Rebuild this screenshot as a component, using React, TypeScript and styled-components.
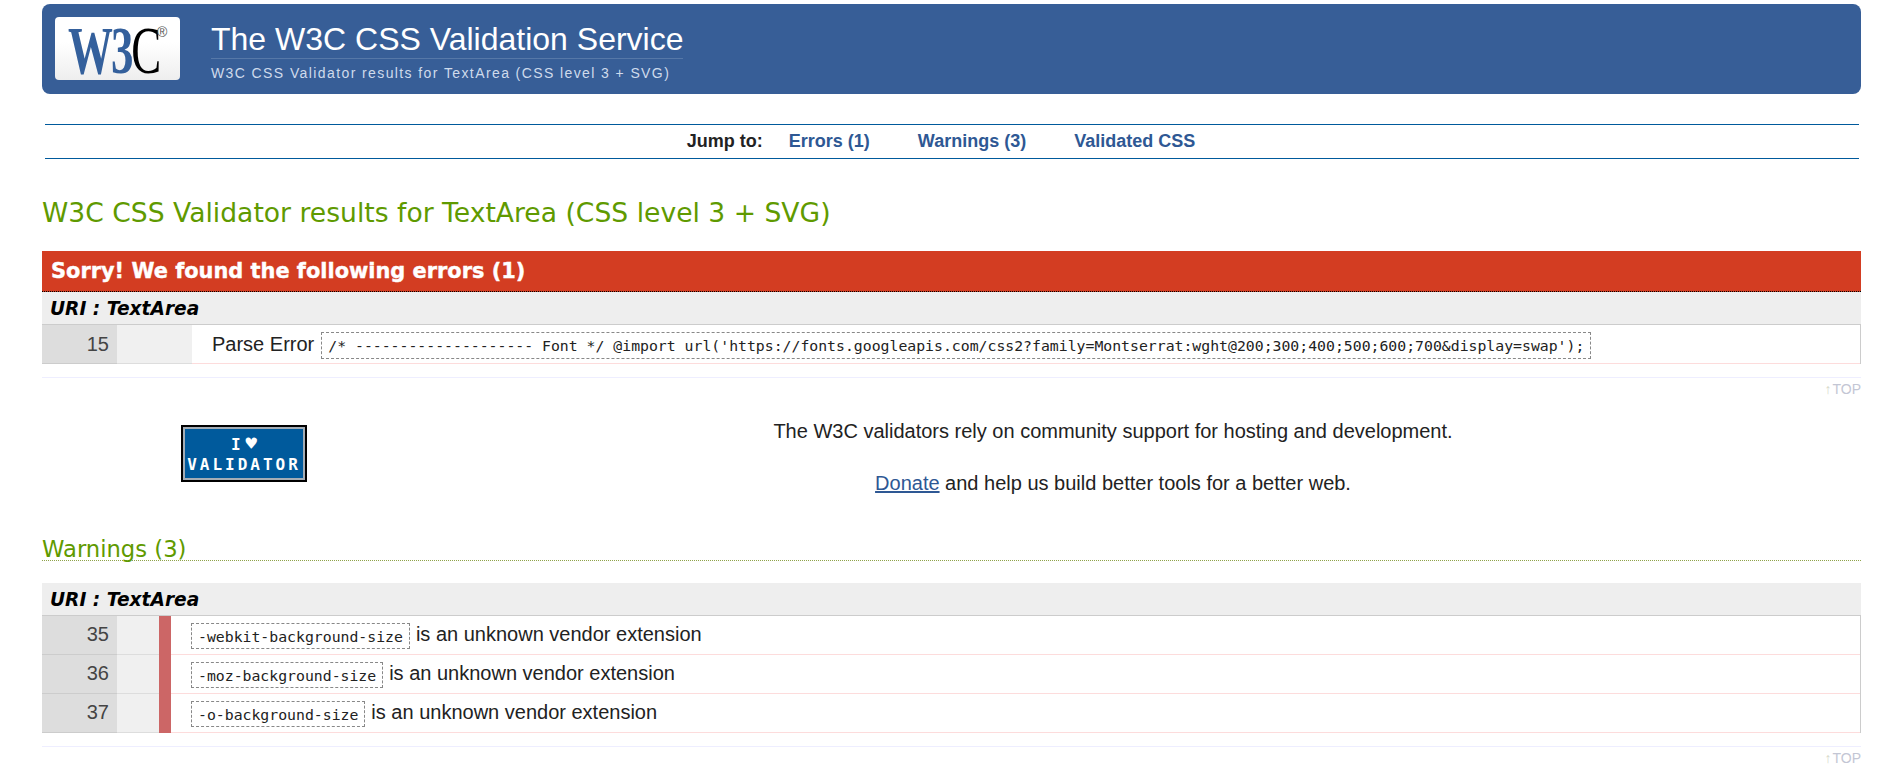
import React from "react"
import styled, { createGlobalStyle } from "styled-components"

const GlobalStyle = createGlobalStyle`
	html, body {
		margin: 0;
		padding: 0;
		background: #fff;
		overflow: hidden;
	}
	body {
		font-family: "Liberation Sans", Arial, sans-serif;
		color: #222;
	}
`

const Page = styled.div`
	width: 1889px;
	height: 776px;
	box-sizing: border-box;
	padding: 4px 28px 0 42px;
	overflow: hidden;
`

const Banner = styled.header`
	display: flex;
	align-items: flex-start;
	height: 90px;
	background: #375e97;
	border-radius: 8px;
`

const Logo = styled.a`
	display: block;
	position: relative;
	flex: none;
	width: 125px;
	height: 63px;
	margin: 13px 0 0 13px;
	background: linear-gradient(#fff 40%, #eee);
	border-radius: 4px;
`

const LogoText = styled.span`
	position: absolute;
	left: 13px;
	top: 3px;
	font-family: "Liberation Serif", serif;
	font-size: 68px;
	font-weight: 700;
	line-height: 60px;
	letter-spacing: -3px;
	color: #34609c;
	transform: scaleX(0.66);
	transform-origin: left top;
	white-space: nowrap;
`

const LogoC = styled.span`
	color: #000;
	font-weight: 400;
`

const LogoMark = styled.span`
	position: absolute;
	left: 102px;
	top: 8px;
	font-size: 14px;
	line-height: 14px;
	color: #555;
`

const BannerText = styled.div`
	margin-left: 31px;
	padding-top: 17px;
`

const Title = styled.h1`
	margin: 0;
	font-size: 32px;
	line-height: 37px;
	font-weight: 400;
	color: #fff;
	border-bottom: 1px solid #5678a8;
`

const Subtitle = styled.p`
	margin: 0;
	padding-top: 5px;
	font-size: 14px;
	line-height: 18px;
	letter-spacing: 1.4px;
	color: #cfdbec;
`

const JumpBar = styled.nav`
	display: flex;
	justify-content: center;
	align-items: center;
	box-sizing: border-box;
	height: 35px;
	margin: 30px 2px 0 3px;
	padding-right: 22px;
	border-top: 1px solid #005a9c;
	border-bottom: 1px solid #005a9c;
	font-size: 18px;
	font-weight: 700;
`

const JumpLabel = styled.span`
	margin-right: 26px;
	color: #222;
`

const JumpLink = styled.a<{ $last?: boolean }>`
	margin-right: ${(p) => (p.$last ? "0" : "48px")};
	color: #2e5894;
	text-decoration: none;
`

const ResultsHeading = styled.h2`
	margin: 36px 0 0;
	font-family: "DejaVu Sans", Verdana, sans-serif;
	font-size: 26.6px;
	line-height: 36px;
	font-weight: 400;
	color: #5f9a00;
`

const ErrorBar = styled.h3`
	display: flex;
	align-items: center;
	box-sizing: border-box;
	height: 41px;
	margin: 20px 0 0;
	padding-left: 9px;
	background: #d33d22;
	border-bottom: 1px dotted #000;
	font-family: "DejaVu Sans", Verdana, sans-serif;
	font-size: 20.9px;
	font-weight: 700;
	-webkit-text-stroke: 0.4px #fff;
	color: #fff;
`

const UriRow = styled.div`
	display: flex;
	align-items: center;
	box-sizing: border-box;
	height: 32px;
	padding-left: 8px;
	background: #eee;
	font-family: "DejaVu Sans", Verdana, sans-serif;
	font-size: 18.6px;
	font-weight: 700;
	font-style: italic;
	color: #000;
`

const Table = styled.div`
	border-right: 1px solid #ccc;
	border-top: 1px solid #ccc;
`

const Row = styled.div`
	display: flex;
	height: 39px;
`

const LineNo = styled.div<{ $top: number }>`
	flex: none;
	box-sizing: border-box;
	width: 75px;
	padding: ${(p) => p.$top}px 8px 0 0;
	background: #ddd;
	border-bottom: 1px solid #ccc;
	text-align: right;
	font-size: 20px;
	line-height: 24px;
	color: #444;
`

const Context = styled.div<{ $wide?: boolean }>`
	flex: none;
	width: ${(p) => (p.$wide ? "75px" : "42px")};
	background: #f0f0f0;
	border-bottom: 1px solid #ddd;
`

const Level = styled.div`
	flex: none;
	width: 12px;
	background: #c66;
`

const Message = styled.div`
	flex: 1;
	display: flex;
	align-items: flex-start;
	box-sizing: border-box;
	padding: 7px 0 0 20px;
	border-bottom: 1px solid #fddcdc;
	font-size: 20px;
	line-height: 24px;
	color: #222;
`

const ErrorLabel = styled.span`
	margin-right: 7px;
`

const WarningLabel = styled.span`
	margin-top: -1px;
`

const Code = styled.code<{ $height: number }>`
	display: block;
	box-sizing: border-box;
	height: ${(p) => p.$height}px;
	margin: 0 6px 0 0;
	padding: 0 6px;
	border: 1px dashed #888;
	font-family: "DejaVu Sans Mono", Consolas, monospace;
	font-size: 14.8px;
	line-height: ${(p) => p.$height - 1}px;
	white-space: pre;
	color: #222;
`

const Rule = styled.div`
	height: 0;
	margin-top: 13px;
	border-top: 1px solid #eef;
`

const TopLink = styled.a`
	display: block;
	margin-top: 2px;
	text-align: right;
	font-size: 14px;
	line-height: 18px;
	color: #c3c6d4;
`

const TopArrow = styled.span`
	color: #d6d8c8;
	margin-right: 1px;
`

const Support = styled.section`
	display: flex;
	height: 134px;
`

const Badge = styled.a`
	flex: none;
	display: flex;
	flex-direction: column;
	align-items: center;
	justify-content: center;
	box-sizing: border-box;
	width: 126px;
	height: 57px;
	margin: 27px 0 0 139px;
	background: #005a9c;
	border: 2px solid #000;
	box-shadow: inset 0 0 0 2px #a4adb5;
	font-family: "DejaVu Sans Mono", monospace;
	font-size: 16px;
	font-weight: 700;
	line-height: 20px;
	color: #fff;
	white-space: nowrap;
`

const BadgeHeart = styled.span`
	font-size: 19px;
	margin-left: 5px;
`

const BadgeWord = styled.span`
	letter-spacing: 3px;
`

const SupportText = styled.div`
	flex: none;
	width: 680px;
	margin-left: 466px;
	padding-top: 21px;
	text-align: center;
	font-size: 20px;
	line-height: 24px;
	color: #222;
`

const SupportLine = styled.p`
	margin: 0 0 28px;
`

const DonateLink = styled.a`
	color: #2e5894;
	text-decoration: underline;
`

const WarningsHeading = styled.h2`
	box-sizing: border-box;
	height: 30px;
	margin: -1px 0 0;
	padding-top: 5px;
	font-family: "DejaVu Sans", Verdana, sans-serif;
	font-size: 22.7px;
	line-height: 26px;
	font-weight: 400;
	color: #5f9a00;
	border-bottom: 1px dotted #8fa34a;
`

const WarningsUri = styled(UriRow)`
	margin-top: 22px;
`

const warnings = [
	{ line: 35, prop: "-webkit-background-size" },
	{ line: 36, prop: "-moz-background-size" },
	{ line: 37, prop: "-o-background-size" },
]

const longCode =
	"/* -------------------- Font */ @import url('https://fonts.googleapis.com/css2?family=Montserrat:wght@200;300;400;500;600;700&display=swap');"

export default function App() {
	return (
		<Page>
			<GlobalStyle />
			<Banner>
				<Logo>
					<LogoText>
						W3<LogoC>C</LogoC>
					</LogoText>
					<LogoMark>®</LogoMark>
				</Logo>
				<BannerText>
					<Title>The W3C CSS Validation Service</Title>
					<Subtitle>W3C CSS Validator results for TextArea (CSS level 3 + SVG)</Subtitle>
				</BannerText>
			</Banner>

			<JumpBar>
				<JumpLabel>Jump to:</JumpLabel>
				<JumpLink>Errors (1)</JumpLink>
				<JumpLink>Warnings (3)</JumpLink>
				<JumpLink $last>Validated CSS</JumpLink>
			</JumpBar>

			<ResultsHeading>W3C CSS Validator results for TextArea (CSS level 3 + SVG)</ResultsHeading>

			<ErrorBar>Sorry! We found the following errors (1)</ErrorBar>
			<UriRow>URI : TextArea</UriRow>
			<Table>
				<Row>
					<LineNo $top={7}>15</LineNo>
					<Context $wide />
					<Message>
						<ErrorLabel>Parse Error</ErrorLabel>
						<Code $height={27}>{longCode}</Code>
					</Message>
				</Row>
			</Table>
			<Rule />
			<TopLink>
				<TopArrow>↑</TopArrow>TOP
			</TopLink>

			<Support>
				<Badge>
					<span>
						I<BadgeHeart>♥</BadgeHeart>
					</span>
					<BadgeWord>VALIDATOR</BadgeWord>
				</Badge>
				<SupportText>
					<SupportLine>The W3C validators rely on community support for hosting and development.</SupportLine>
					<SupportLine>
						<DonateLink>Donate</DonateLink> and help us build better tools for a better web.
					</SupportLine>
				</SupportText>
			</Support>

			<WarningsHeading>Warnings (3)</WarningsHeading>
			<WarningsUri>URI : TextArea</WarningsUri>
			<Table>
				{warnings.map((w) => (
					<Row key={w.line}>
						<LineNo $top={6}>{w.line}</LineNo>
						<Context />
						<Level />
						<Message>
							<Code $height={26}>{w.prop}</Code>
							<WarningLabel>is an unknown vendor extension</WarningLabel>
						</Message>
					</Row>
				))}
			</Table>
			<Rule />
			<TopLink>
				<TopArrow>↑</TopArrow>TOP
			</TopLink>
		</Page>
	)
}
